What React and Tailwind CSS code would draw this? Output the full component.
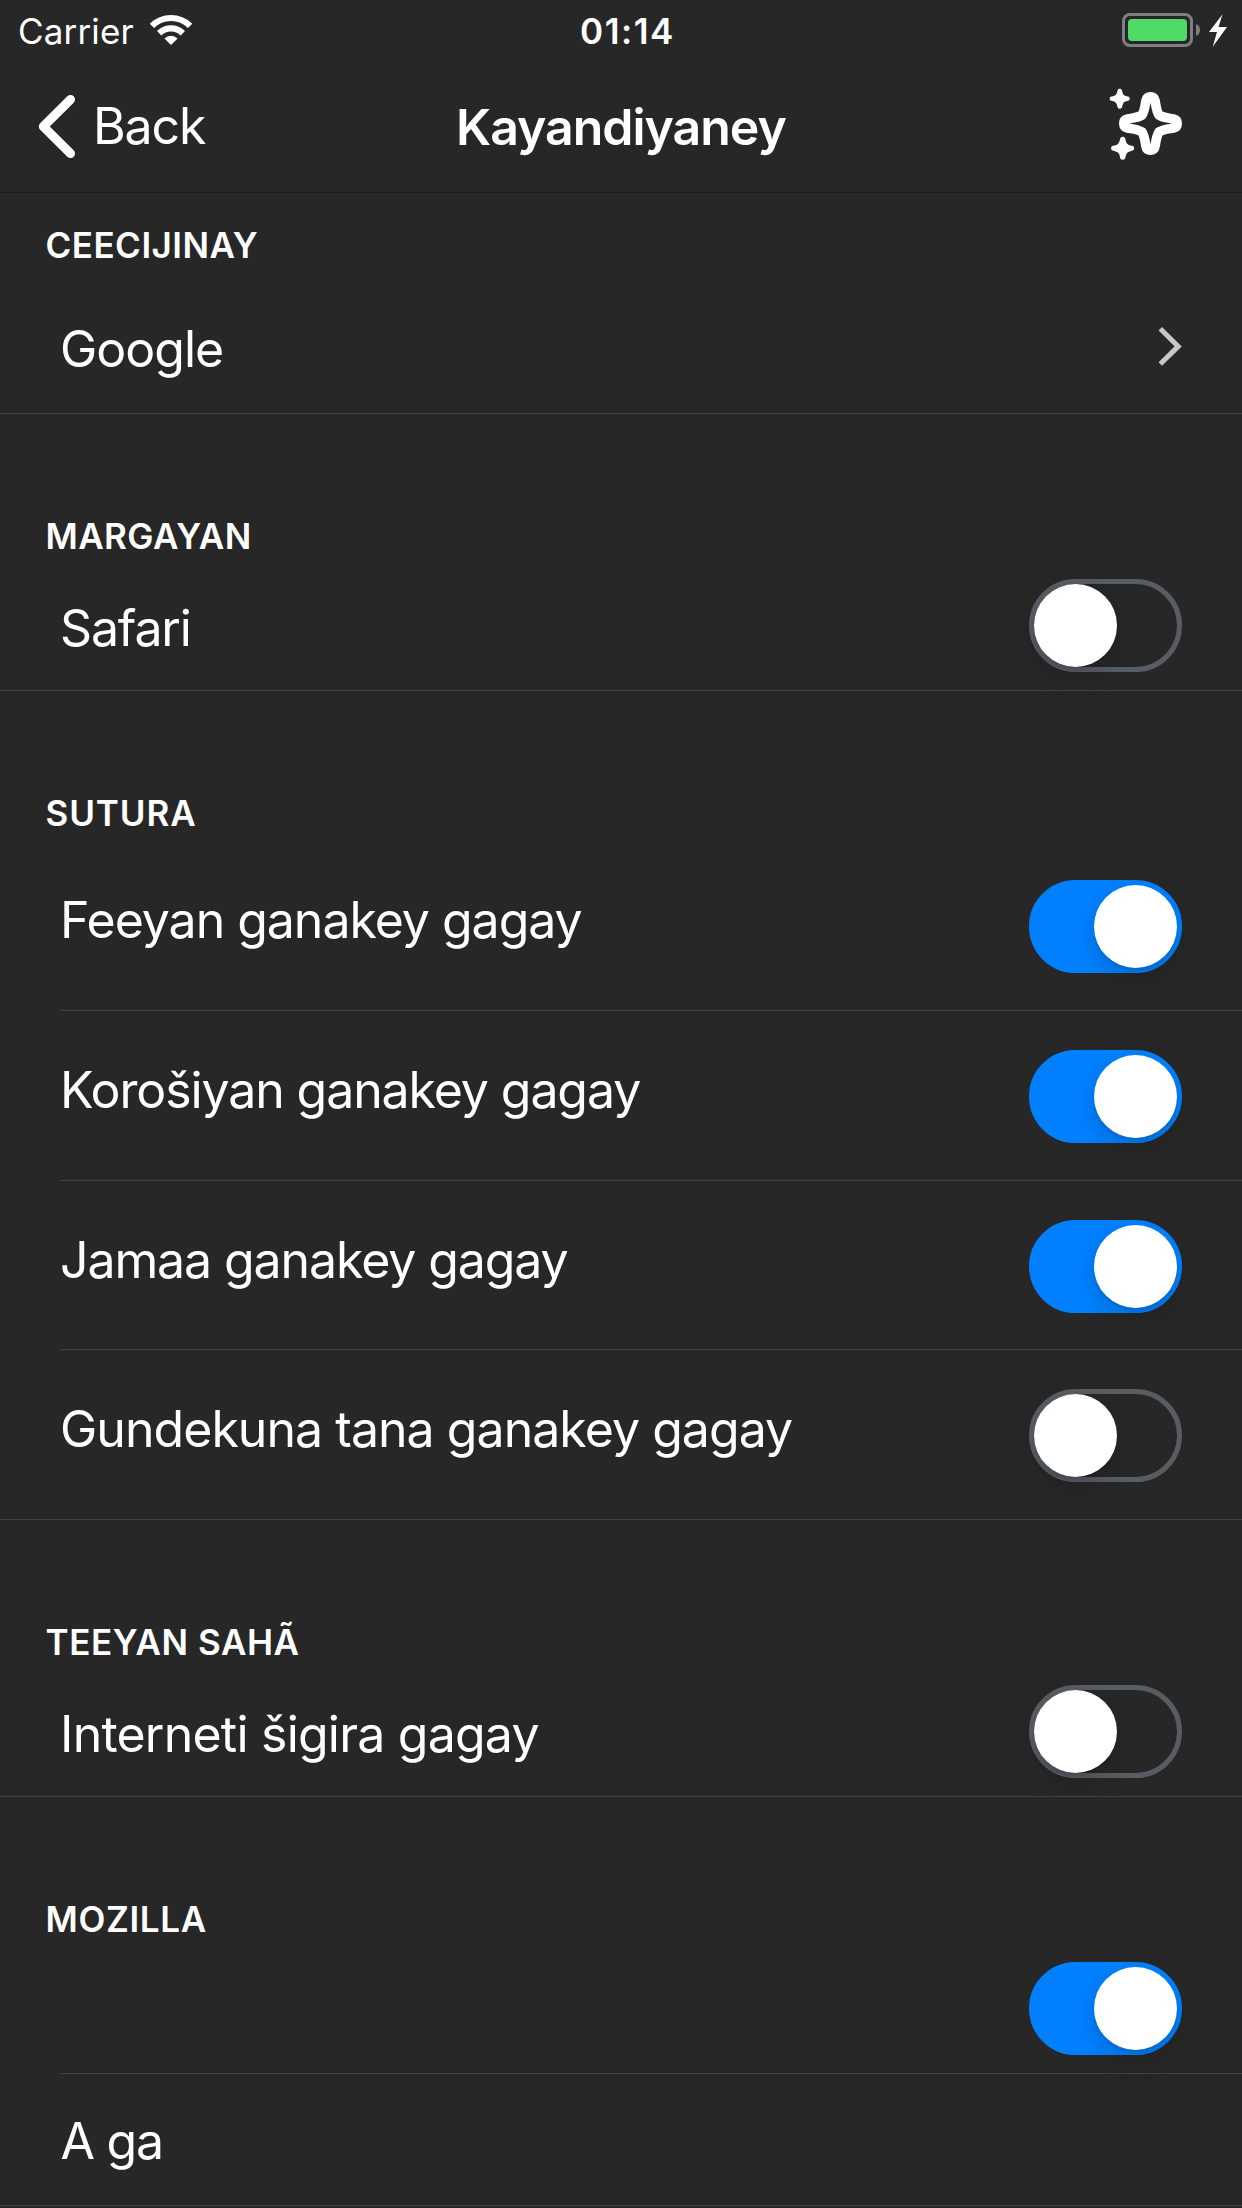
function StatusBar() {
  return (
    <div className="grid h-[60px] grid-cols-[1fr_auto_1fr] items-start text-[35px] leading-[40px]">
      <div className="flex pl-[18px]">
        <span className="mt-[11px] w-[132px] tracking-[0.150px]">Carrier</span>
        <svg className="mt-[14px] h-8 w-[42px]" viewBox="0 0 42 32" fill="none" stroke="white" strokeWidth="6.2">
          <path d="M1.9 11.9A27 27 0 0 1 40.1 11.9" />
          <path d="M9.2 19.2A16.7 16.7 0 0 1 32.8 19.2" />
          <path d="M21 31 14.4 24.4A9.3 9.3 0 0 1 27.6 24.4Z" fill="white" stroke="none" />
        </svg>
      </div>
      <span className="mt-[11px] pl-[13px] font-semibold tracking-[1.54px]">01:14</span>
      <div className="flex justify-end pr-[14px]">
        <div className="mt-[13px] h-[34px] w-[71px] rounded-[8px] border-3 border-[#7f7f7f] p-[3px]">
          <div className="h-full rounded-[4px] bg-[#4fdb65]" />
        </div>
        <svg className="mt-[13px] h-[34px] w-[35px]" viewBox="0 0 35 34">
          <path d="M3 11C5.600 12 7 14.200 7 17S5.600 22 3 23Z" fill="#7f7f7f" />
          <path d="M29.500 1.300 16 19H24L19.700 33.700 34 14H25.500Z" fill="white" />
        </svg>
      </div>
    </div>
  );
}

function NavBar() {
  return (
    <div className="grid h-[133px] grid-cols-[1fr_auto_1fr] items-start border-b border-[#1c1c1c] text-[50px] leading-[60px]">
      <div className="flex pl-[38px]">
        <svg className="mt-[34px] h-[65px] w-[38px]" viewBox="0 0 38 65" fill="none" stroke="white" strokeWidth="9" strokeLinecap="round" strokeLinejoin="round">
          <path d="M32.500 5.500 5.300 32.500 32.500 59.500" />
        </svg>
        <span className="mt-9 ml-[17px] tracking-[-1.150px]">Back</span>
      </div>
      <h1 className="mt-[37px] font-semibold tracking-[-1.020px]">Kayandiyaney</h1>
      <div className="flex justify-end pr-[58px]">
        <svg className="mt-[27px] h-[75px] w-[76px]" viewBox="0 0 76 75">
          <g transform="translate(42.500 36.500)">
            <path
              d="M0-26.700C2.700-26.700 4-25.500 4.500-23C5.700-16.500 6-12 8.500-8.500C12-6 16.500-5.700 23-4.500C25.500-4 26.700-2.700 26.700 0S25.500 4 23 4.500C16.500 5.700 12 6 8.500 8.500C6 12 5.700 16.500 4.500 23C4 25.500 2.700 26.700 0 26.700S-4 25.500-4.500 23C-5.700 16.500-6 12-8.500 8.500C-12 6-16.500 5.700-23 4.500C-25.500 4-26.700 2.700-26.700 0S-25.500-4-23-4.500C-16.500-5.700-12-6-8.500-8.500C-6-12-5.700-16.500-4.500-23C-4-25.500-2.700-26.700 0-26.700Z"
              fill="none" stroke="white" strokeWidth="9.600"
            />
          </g>
          <path id="spark" d="M11.700 1.700C13 1.700 13.700 2.300 14 3.500C14.700 6.500 15 7.500 15.700 7.700C16.500 8.700 17.500 9 20 9.500C21.200 9.800 21.700 10.500 21.700 11.700S21.200 13.500 20 13.800C17.500 14.400 16.500 14.800 15.700 15.700C15 16.500 14.700 17.500 14 20C13.700 21.200 13 21.700 11.700 21.700S9.800 21.200 9.500 20C9 17.500 8.700 16.500 7.700 15.700C6.800 14.800 6 14.400 3.400 13.800C2.200 13.500 1.700 13 1.700 11.700S2.200 9.800 3.400 9.500C6 9 6.800 8.700 7.700 7.700C8.700 6.800 9 6 9.500 3.500C9.800 2.300 10.500 1.700 11.700 1.700Z" fill="white" />
          <use href="#spark" transform="translate(1.200 47.800) scale(1.150)" />
        </svg>
      </div>
    </div>
  );
}

function Toggle({ on }) {
  return (
    <div className={`flex h-[93px] w-[153px] shrink-0 rounded-full border-5 ${on ? 'justify-end border-[#0080ff] bg-[#0080ff]' : 'justify-start border-[#585d64]'}`}>
      <div className="size-[83px] rounded-full bg-white shadow-[0_9px_24px_rgba(0,0,0,0.17),0_3px_3px_rgba(0,0,0,0.08)]" />
    </div>
  );
}

const heading = 'pl-[45.500px] text-[35px] leading-[40px] font-semibold';
const label = 'text-[50px] leading-[60px] whitespace-pre';
const compactRow = 'flex h-[132px] items-start justify-between border-b border-[#424244]';
const tallRow = 'flex items-start justify-between border-b border-[#424244] pr-[60px]';

export default function App() {
  return (
    <div className="h-[2208px] w-[1242px] overflow-hidden bg-[#272727] font-['Inter',sans-serif] text-white">
      <StatusBar />
      <NavBar />

      <section>
        <h2 className={`${heading} h-[93px] pt-8 tracking-[0.480px]`}>CEECIJINAY</h2>
        <div className="flex h-32 items-start justify-between border-b border-[#424244] pr-[60px] pl-[60px]">
          <span className={`${label} mt-[33px] tracking-[-1px]`}>Google</span>
          <svg className="mt-10 h-10 w-6" viewBox="0 0 24 40" fill="none" stroke="#c7c7cc" strokeWidth="5">
            <path d="M2.300 2.800 20.200 20.400 2.300 38" />
          </svg>
        </div>
      </section>

      <section>
        <h2 className={`${heading} h-[145px] pt-[102px] tracking-[0.420px]`}>MARGAYAN</h2>
        <div className={`${compactRow} pr-[60px] pl-[60px]`}>
          <span className={`${label} mt-[39px] tracking-[-1.150px]`}>Safari</span>
          <div className="mt-5"><Toggle /></div>
        </div>
      </section>

      <section>
        <h2 className={`${heading} h-[150px] pt-[102px] tracking-[0.900px]`}>SUTURA</h2>
        <div className={`${tallRow} ml-[60px] h-[170px]`}>
          <span className={`${label} mt-[49px] tracking-[-1.030px]`}>Feeyan ganakey gagay</span>
          <div className="mt-[39px]"><Toggle on /></div>
        </div>
        <div className={`${tallRow} ml-[60px] h-[170px]`}>
          <span className={`${label} mt-[49px] tracking-[-1.100px]`}>Korošiyan ganakey gagay</span>
          <div className="mt-[39px]"><Toggle on /></div>
        </div>
        <div className={`${tallRow} ml-[60px] h-[169px]`}>
          <span className={`${label} mt-[49px] tracking-[-1.100px]`}>Jamaa ganakey gagay</span>
          <div className="mt-[39px]"><Toggle on /></div>
        </div>
        <div className={`${tallRow} h-[170px] pl-[60px]`}>
          <span className={`${label} mt-[49px] tracking-[-0.960px]`}>Gundekuna tana ganakey gagay</span>
          <div className="mt-[39px]"><Toggle /></div>
        </div>
      </section>

      <section>
        <h2 className={`${heading} h-[145px] pt-[102px] tracking-[0.550px]`}>TEEYAN SAHÃ</h2>
        <div className={`${compactRow} pr-[60px] pl-[60px]`}>
          <span className={`${label} mt-[39px] tracking-[-0.780px]`}>Interneti šigira gagay</span>
          <div className="mt-5"><Toggle /></div>
        </div>
      </section>

      <section>
        <h2 className={`${heading} h-[145px] pt-[102px] tracking-[0.650px]`}>MOZILLA</h2>
        <div className={`${compactRow} ml-[60px] pr-[60px]`}>
          <span />
          <div className="mt-5"><Toggle on /></div>
        </div>
        <div className={`${compactRow} pl-[60.500px]`}>
          <span className={`${label} mt-[37px] tracking-[-1.250px]`}>A ga</span>
        </div>
      </section>
    </div>
  );
}
